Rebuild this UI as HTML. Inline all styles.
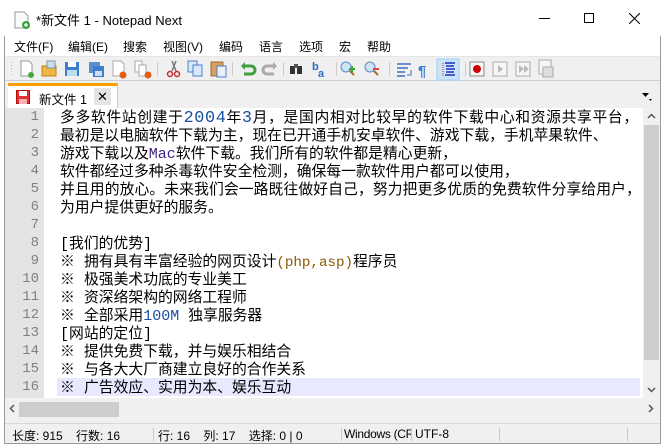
<!DOCTYPE html>
<html><head><meta charset="utf-8">
<style>
*{margin:0;padding:0;box-sizing:border-box}
body{width:664px;height:448px;background:#fff;position:relative;overflow:hidden;font-family:"Liberation Sans","Noto Sans CJK SC",sans-serif;font-size:12px;color:#000}
.abs{position:absolute}
#win{left:4px;top:0;width:657px;height:444px;border:1px solid #9a9a9a;border-top:none;background:#f0f0f0}
#title{left:0;top:0;width:664px;height:36px;background:#fff}
#menu{left:5px;top:36px;width:655px;height:20px;background:#fff}
#menu span{position:absolute;top:2px;font-size:12px}
#tb{left:5px;top:56px;width:655px;height:25px;background:#f0f0f0;border-top:1px solid #e6e6e6;border-bottom:1px solid #d0d0d0}
#tabs{left:5px;top:81px;width:655px;height:27px;background:#f0f0f0}
#ed{left:5px;top:108px;width:638px;height:290px;background:#fff}
#gut{left:5px;top:108px;width:39px;height:290px;background:#e4e4e4}
.ln{position:absolute;left:5px;width:34px;text-align:right;color:#808080;font-family:"Liberation Mono",monospace;font-size:14px;height:18px;line-height:18px}
.tx{position:absolute;left:60px;height:18px;line-height:18px;font-size:14.8px;font-family:"Noto Sans CJK SC",sans-serif;white-space:pre;letter-spacing:0}
.tx span{font-family:"Liberation Mono",monospace;font-size:15px}
.tx span.n{font-size:16.8px}
.tx span.k{display:inline-block;width:24px;font-family:"Noto Sans CJK SC",sans-serif;font-size:14.8px}
.tx span.p{font-size:14.2px}
.n{color:#1a4fa0}.m{color:#402080}.p{color:#8a5a00}.h{color:#1a4fa0}
#vs{left:643px;top:108px;width:17px;height:290px;background:#f0f0f0}
#hs{left:5px;top:398px;width:655px;height:22px;background:#f0f0f0}
#sb{left:5px;top:423px;width:655px;height:20px;background:#f0f0f0;border-top:1px solid #d8d8d8}
#sb span{position:absolute;top:3px;font-size:12px;white-space:nowrap;overflow:hidden}
.sep{position:absolute;top:4px;width:1px;height:13px;background:#c8c8c8}
</style></head><body>
<div id="win" class="abs"></div>
<div id="title" class="abs">
 <svg class="abs" style="left:14px;top:11px" width="16" height="18"><path d="M1 1h9l4 4v12H1z" fill="#fafafa" stroke="#999"/><circle cx="12" cy="14" r="4" fill="#3aa03a"/><path d="M10 14h4M12 12v4" stroke="#fff" stroke-width="1.3"/></svg>
 <div class="abs" style="left:36px;top:10px;font-size:13px">*新文件 1 - Notepad Next</div>
 <div class="abs" style="left:539px;top:18px;width:11px;height:1px;background:#000"></div>
 <div class="abs" style="left:584px;top:13px;width:10px;height:10px;border:1px solid #000"></div>
 <svg class="abs" style="left:629px;top:13px" width="11" height="11"><path d="M0 0L11 11M11 0L0 11" stroke="#000"/></svg>
</div>
<div id="menu" class="abs">
 <span style="left:9px">文件(F)</span><span style="left:63px">编辑(E)</span><span style="left:118px">搜索</span><span style="left:158px">视图(V)</span><span style="left:214px">编码</span><span style="left:254px">语言</span><span style="left:294px">选项</span><span style="left:334px">宏</span><span style="left:362px">帮助</span>
</div>
<div id="tb" class="abs">
 <svg width="655" height="24" style="position:absolute;left:0;top:0">
  <g fill="#bbb"><rect x="6" y="5" width="1" height="1"/><rect x="6" y="8" width="1" height="1"/><rect x="6" y="11" width="1" height="1"/><rect x="6" y="14" width="1" height="1"/><rect x="6" y="17" width="1" height="1"/></g>
  <path d="M16 4h8l3 3v12H16z" fill="#fff" stroke="#999"/><circle cx="26" cy="18" r="3" fill="#4a4"/>
  <path d="M37 9h14v10H37z" fill="#f0b840" stroke="#c08020"/><path d="M42 4h8v7h-8z" fill="#cde" stroke="#79a"/>
  <rect x="60" y="5" width="14" height="14" fill="#3c7fd0"/><rect x="63" y="5" width="8" height="5" fill="#fff"/><rect x="62" y="13" width="10" height="6" fill="#bde"/>
  <rect x="84" y="5" width="11" height="11" fill="#5a8fd0"/><rect x="88" y="9" width="11" height="11" fill="#3c7fd0"/><rect x="90" y="14" width="7" height="5" fill="#cde"/>
  <path d="M108 4h8l3 3v12h-11z" fill="#fff" stroke="#aaa"/><circle cx="118" cy="18" r="3.5" fill="#e06010"/>
  <path d="M130 4h7v11h-7z" fill="#fff" stroke="#aaa"/><path d="M134 8h7v11h-7z" fill="#fff" stroke="#aaa"/><circle cx="143" cy="18" r="3.5" fill="#e06010"/>
  <rect x="152" y="5" width="1" height="14" fill="#ccc"/>
  <path d="M167 4l4 10M171 4l-4 10" stroke="#777" stroke-width="1.5"/><circle cx="165" cy="17" r="2.5" fill="none" stroke="#c03030" stroke-width="1.5"/><circle cx="172" cy="17" r="2.5" fill="none" stroke="#c03030" stroke-width="1.5"/>
  <rect x="183" y="4" width="9" height="11" fill="#d8e8fa" stroke="#4a80c8"/><rect x="188" y="8" width="9" height="11" fill="#d8e8fa" stroke="#4a80c8"/>
  <rect x="206" y="5" width="12" height="14" fill="#d8a060" stroke="#a06a30"/><rect x="212" y="9" width="9" height="11" fill="#e8f0fc" stroke="#4a80c8"/>
  <rect x="227" y="5" width="1" height="14" fill="#ccc"/>
  <path d="M238 9h8a4 4 0 010 8h-7" fill="none" stroke="#40a040" stroke-width="3"/><path d="M236 9l4-4v8z" fill="#40a040"/>
  <path d="M270 9h-8a4 4 0 000 8h7" fill="none" stroke="#aaa" stroke-width="3"/><path d="M272 9l-4-4v8z" fill="#aaa"/>
  <rect x="278" y="5" width="1" height="14" fill="#ccc"/>
  <rect x="285" y="9" width="5" height="8" fill="#333"/><rect x="292" y="9" width="5" height="8" fill="#333"/><rect x="289" y="7" width="4" height="4" fill="#555"/>
  <text x="307" y="13" font-size="11" font-weight="bold" fill="#2a70c0" font-family="Liberation Sans">b</text><text x="313" y="20" font-size="11" font-weight="bold" fill="#2a70c0" font-family="Liberation Sans">a</text>
  <rect x="331" y="5" width="1" height="14" fill="#ccc"/>
  <circle cx="341" cy="10" r="5" fill="#cde4f8" stroke="#5a8ac0"/><path d="M345 14l4 4" stroke="#a07020" stroke-width="2"/><path d="M344 12h6M347 9v6" stroke="#3a3" stroke-width="2"/>
  <circle cx="365" cy="10" r="5" fill="#cde4f8" stroke="#5a8ac0"/><path d="M369 14l4 4" stroke="#a07020" stroke-width="2"/><path d="M368 12h6" stroke="#e04040" stroke-width="2"/>
  <rect x="384" y="5" width="1" height="14" fill="#ccc"/>
  <path d="M392 7h14M392 11h11M392 15h8M392 19h8" stroke="#3a70c0" stroke-width="1.5"/><path d="M406 13v5h-4" fill="none" stroke="#3a70c0"/>
  <text x="413" y="19" font-size="15" font-weight="bold" fill="#3a80d0" font-family="Liberation Sans">¶</text>
  <rect x="432" y="2" width="22" height="21" fill="#cce4f7" stroke="#99d1ff"/>
  <path d="M438 6v14" stroke="#c03030" stroke-dasharray="1 1"/><path d="M440 6h10M441 9h8M441 12h9M441 15h8M440 18h10" stroke="#1a30c0" stroke-width="1.5"/>
  <rect x="460" y="5" width="1" height="14" fill="#ccc"/>
  <rect x="465" y="5" width="14" height="14" fill="#f6f6f6" stroke="#888"/><circle cx="472" cy="12" r="4" fill="#c00"/>
  <rect x="488" y="5" width="14" height="14" fill="#f6f6f6" stroke="#aaa"/><path d="M493 8l5 4-5 4z" fill="#bbb"/>
  <rect x="511" y="5" width="14" height="14" fill="#f6f6f6" stroke="#aaa"/><path d="M514 8l5 4-5 4zM519 8l5 4-5 4z" fill="#bbb"/>
  <rect x="534" y="3" width="12" height="14" fill="#f6f6f6" stroke="#aaa"/><rect x="538" y="10" width="10" height="10" fill="#ddd" stroke="#aaa"/>
 </svg>
</div>
<div id="tabs" class="abs">
 <div class="abs" style="left:3px;top:2px;width:110px;height:26px;background:#fff;border-top:3px solid #f9a000;border-right:1px solid #ccc"></div>
 <svg class="abs" style="left:11px;top:9px" width="14" height="14"><rect x="0.5" y="0.5" width="13" height="13" fill="#e03030" stroke="#b01010"/><rect x="3" y="1" width="8" height="5" fill="#fff"/><rect x="3" y="9" width="8" height="5" fill="#f8b0b0"/></svg>
 <div class="abs" style="left:34px;top:8px;font-size:12.5px">新文件 1</div>
 <div class="abs" style="left:89px;top:7px;width:17px;height:17px;background:#e4e4e4;font-size:13px;text-align:center;line-height:17px">✕</div>
 <svg class="abs" style="left:636px;top:11px" width="12" height="10"><path d="M1 1h7l-3.5 4z" fill="#000"/><path d="M8 7h3l-1.5 2z" fill="#000"/></svg>
</div>
<div id="ed" class="abs"></div>
<div class="abs" style="left:57px;top:378px;width:583px;height:18px;background:#e8e8ff"></div>
<div id="gut" class="abs"></div>
<div class="abs" style="left:0;top:108px;width:664px;height:290px">
<div class="ln" style="top:0">1</div><div class="ln" style="top:18px">2</div><div class="ln" style="top:36px">3</div><div class="ln" style="top:54px">4</div><div class="ln" style="top:72px">5</div><div class="ln" style="top:90px">6</div><div class="ln" style="top:108px">7</div><div class="ln" style="top:126px">8</div><div class="ln" style="top:144px">9</div><div class="ln" style="top:162px">10</div><div class="ln" style="top:180px">11</div><div class="ln" style="top:198px">12</div><div class="ln" style="top:216px">13</div><div class="ln" style="top:234px">14</div><div class="ln" style="top:252px">15</div><div class="ln" style="top:270px">16</div>
<div class="tx" style="top:0;letter-spacing:0.65px">多多软件站创建于<span class="n">2004</span>年<span class="n">3</span>月，是国内相对比较早的软件下载中心和资源共享平台，</div>
<div class="tx" style="top:18px">最初是以电脑软件下载为主，现在已开通手机安卓软件、游戏下载，手机苹果软件、</div>
<div class="tx" style="top:36px">游戏下载以及<span class="m">Mac</span>软件下载。我们所有的软件都是精心更新，</div>
<div class="tx" style="top:54px">软件都经过多种杀毒软件安全检测，确保每一款软件用户都可以使用，</div>
<div class="tx" style="top:72px;letter-spacing:0.1px">并且用的放心。未来我们会一路既往做好自己，努力把更多优质的免费软件分享给用户，</div>
<div class="tx" style="top:90px">为用户提供更好的服务。</div>
<div class="tx" style="top:126px"><span>[</span>我们的优势<span>]</span></div>
<div class="tx" style="top:144px"><span class="k">※</span>拥有具有丰富经验的网页设计<span class="p">(php,asp)</span>程序员</div>
<div class="tx" style="top:162px"><span class="k">※</span>极强美术功底的专业美工</div>
<div class="tx" style="top:180px"><span class="k">※</span>资深络架构的网络工程师</div>
<div class="tx" style="top:198px"><span class="k">※</span>全部采用<span class="h">100M </span>独享服务器</div>
<div class="tx" style="top:216px"><span>[</span>网站的定位<span>]</span></div>
<div class="tx" style="top:234px"><span class="k">※</span>提供免费下载，并与娱乐相结合</div>
<div class="tx" style="top:252px"><span class="k">※</span>与各大大厂商建立良好的合作关系</div>
<div class="tx" style="top:270px"><span class="k">※</span>广告效应、实用为本、娱乐互动</div>
</div>
<div id="vs" class="abs">
 <svg class="abs" style="left:4px;top:5px" width="9" height="6"><path d="M1 5l3.5-3.5L8 5" fill="none" stroke="#555" stroke-width="1.5"/></svg>
 <div class="abs" style="left:1px;top:17px;width:15px;height:235px;background:#cdcdcd"></div>
 <svg class="abs" style="left:4px;top:279px" width="9" height="6"><path d="M1 1l3.5 3.5L8 1" fill="none" stroke="#555" stroke-width="1.5"/></svg>
</div>
<div id="hs" class="abs">
 <svg class="abs" style="left:4px;top:6px" width="6" height="9"><path d="M5 1L1.5 4.5 5 8" fill="none" stroke="#555" stroke-width="1.5"/></svg>
 <div class="abs" style="left:14px;top:4px;width:100px;height:15px;background:#cdcdcd"></div>
 <svg class="abs" style="left:643px;top:6px" width="6" height="9"><path d="M1 1l3.5 3.5L1 8" fill="none" stroke="#555" stroke-width="1.5"/></svg>
</div>
<div id="sb" class="abs">
 <span style="left:7px">长度: 915&nbsp;&nbsp;&nbsp;&nbsp;行数: 16</span>
 <div class="sep" style="left:148px"></div>
 <span style="left:153px">行: 16&nbsp;&nbsp;&nbsp;&nbsp;列: 17&nbsp;&nbsp;&nbsp;&nbsp;选择: 0 | 0</span>
 <div class="sep" style="left:336px"></div>
 <span style="left:339px;width:68px;letter-spacing:-0.3px">Windows (CR</span>
 <div class="sep" style="left:406px"></div>
 <span style="left:410px">UTF-8</span>
 <div class="sep" style="left:494px"></div>
 <div class="sep" style="left:622px"></div>
</div>
</body></html>
